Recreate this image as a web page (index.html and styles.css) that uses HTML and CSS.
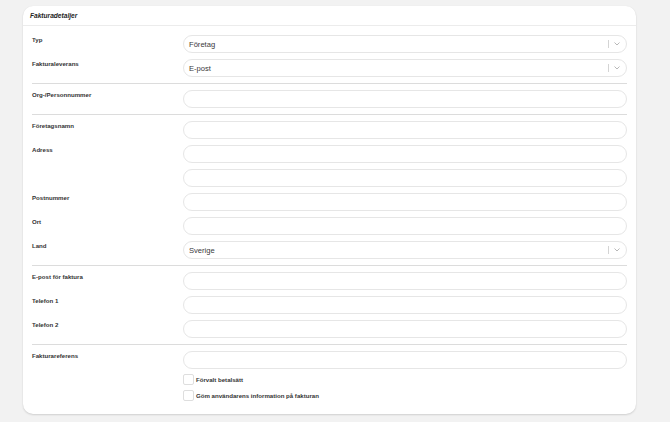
FILE: index.html
```html
<!DOCTYPE html>
<html lang="sv">
<head>
<meta charset="utf-8">
<title>Fakturadetaljer</title>
<link rel="stylesheet" href="styles.css">
</head>
<body>
<div class="card">
  <div class="card-header">Fakturadetaljer</div>
  <div class="card-body">
    <div class="row"><label class="lbl">Typ</label>
      <div class="select"><span class="val">Företag</span><span class="sep"></span><svg class="chev" viewBox="0 0 6 4" width="6" height="4"><path d="M0.5 0.5 L3 3 L5.5 0.5" fill="none" stroke="#b0b0b0" stroke-width="0.9"/></svg></div></div>
    <div class="row"><label class="lbl">Fakturaleverans</label>
      <div class="select"><span class="val">E-post</span><span class="sep"></span><svg class="chev" viewBox="0 0 6 4" width="6" height="4"><path d="M0.5 0.5 L3 3 L5.5 0.5" fill="none" stroke="#b0b0b0" stroke-width="0.9"/></svg></div></div>
    <div class="divider"></div>
    <div class="row"><label class="lbl">Org-/Personnummer</label><input class="inp" type="text"></div>
    <div class="divider"></div>
    <div class="row"><label class="lbl">Företagsnamn</label><input class="inp" type="text"></div>
    <div class="row"><label class="lbl">Adress</label><input class="inp" type="text"></div>
    <div class="row"><span class="lbl"></span><input class="inp" type="text"></div>
    <div class="row"><label class="lbl">Postnummer</label><input class="inp" type="text"></div>
    <div class="row"><label class="lbl">Ort</label><input class="inp" type="text"></div>
    <div class="row"><label class="lbl">Land</label>
      <div class="select"><span class="val">Sverige</span><span class="sep"></span><svg class="chev" viewBox="0 0 6 4" width="6" height="4"><path d="M0.5 0.5 L3 3 L5.5 0.5" fill="none" stroke="#b0b0b0" stroke-width="0.9"/></svg></div></div>
    <div class="divider"></div>
    <div class="row"><label class="lbl">E-post för faktura</label><input class="inp" type="text"></div>
    <div class="row"><label class="lbl">Telefon 1</label><input class="inp" type="text"></div>
    <div class="row"><label class="lbl">Telefon 2</label><input class="inp" type="text"></div>
    <div class="divider"></div>
    <div class="row"><label class="lbl">Fakturareferens</label><input class="inp" type="text"></div>
    <div class="checks">
      <div class="check"><span class="box"></span><span class="ctext">Förvalt betalsätt</span></div>
      <div class="check"><span class="box"></span><span class="ctext">Göm användarens information på fakturan</span></div>
    </div>
  </div>
</div>
</body>
</html>
```
FILE: styles.css
```css
* { box-sizing: border-box; }
html, body { margin: 0; padding: 0; }
body {
  background: #f2f2f2;
  font-family: "Liberation Sans", Arial, sans-serif;
  color: #2a2a2a;
  width: 670px;
  height: 422px;
  overflow: hidden;
}
.card {
  margin: 6px 0 0 23px;
  width: 613px;
  height: 408px;
  background: #fff;
  border-radius: 10px;
  box-shadow: 0 1px 2px rgba(0,0,0,0.14), 0 0 1px rgba(0,0,0,0.06);
}
.card-header {
  height: 20px;
  padding: 6px 0 0 7px;
  font-size: 6.6px;
  line-height: 8px;
  font-weight: bold;
  font-style: italic;
  color: #222;
  border-bottom: 1px solid #ececec;
}
.card-body {
  padding: 9px 9px 0 9px;
}
.row {
  display: grid;
  grid-template-columns: 151px 444px;
  margin-bottom: 6px;
}
.lbl {
  font-size: 6.1px;
  line-height: 8px;
  font-weight: bold;
  color: #333;
  padding-top: 1px;
}
.inp, .select {
  height: 18px;
  border: 1px solid #e6e6e6;
  border-radius: 9px;
  background: #fff;
  margin: 0;
  padding: 0 5px;
  font-family: "Liberation Sans", Arial, sans-serif;
  font-size: 7.6px;
  color: #3a3a3a;
  outline: none;
}
.select {
  display: flex;
  align-items: center;
}
.val { flex: 1; }
.sep {
  width: 1px;
  height: 8px;
  background: #d4d4d4;
  margin-right: 5px;
}
.chev { margin-right: 1px; }
.divider {
  height: 1px;
  background: #dcdcdc;
  margin: 1px 0 6px 0;
}
.checks {
  margin-left: 151px;
  margin-top: -1px;
}
.check {
  display: flex;
  align-items: center;
  height: 11px;
  margin-bottom: 5px;
}
.box {
  width: 11px;
  height: 11px;
  border: 1px solid #dedede;
  border-radius: 2px;
  margin-right: 2px;
}
.ctext {
  font-size: 6.1px;
  font-weight: bold;
  color: #333;
}
```
